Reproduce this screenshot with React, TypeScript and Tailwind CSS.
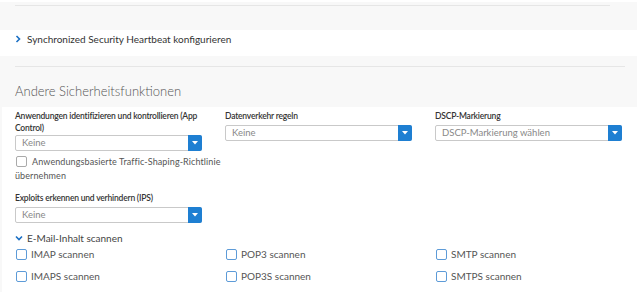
import { useState } from 'react'

const font = { fontFamily: 'Lato, "Open Sans", sans-serif' }

function Select({ value }: { value: string }) {
  return (
    <div className="flex h-[16px] w-[187px] rounded-[2px] border border-[#c9c9c9] bg-white">
      <div className="flex flex-1 items-center pl-[6px] text-[9.5px] text-[#888]">{value}</div>
      <div className="-my-px -mr-px flex w-[14px] items-center justify-center rounded-r-[2px] bg-[#1e7fd2]">
        <svg width="6" height="4" viewBox="0 0 6 4">
          <path d="M0 0h6L3 3.5z" fill="#fff" />
        </svg>
      </div>
    </div>
  )
}

function Check({ label }: { label: string }) {
  const [on, setOn] = useState(false)
  return (
    <label className="flex h-[14px] items-center gap-[4px] text-[10px] text-[#555]">
      <input type="checkbox" checked={on} onChange={() => setOn(!on)} className="hidden" />
      <span className="h-[11px] w-[11px] rounded-[2px] border border-[#5d9bd8] bg-white" />
      {label}
    </label>
  )
}

const labelCls = 'w-[187px] text-[8.5px] leading-[12px] font-semibold tracking-[-0.2px] text-[#333]'

export default function App() {
  return (
    <div className="h-[292px] w-[640px] overflow-hidden bg-white pt-[2px]" style={font}>
      <div className="mr-[3px] h-[28px] bg-[#f8f8f8] px-[15px] pt-[3px]">
        <div className="mr-[12px] border-t border-[#e6e6e6]" />
      </div>

      <div className="flex h-[26px] items-start gap-[6px] pt-[2px] pl-[15px] text-[10px] leading-[14px] text-[#333]">
        <svg width="6" height="14" viewBox="0 0 6 14">
          <path d="M1.5 4l3 3-3 3" stroke="#1a6fc4" strokeWidth="1.6" fill="none" />
        </svg>
        Synchronized Security Heartbeat konfigurieren
      </div>

      <div className="mr-[3px] bg-[#f8f8f8] pt-[10px]">
        <div className="mr-[12px] ml-[15px] border-t border-[#e6e6e6]" />
        <h2 className="h-[40px] px-[15px] pt-[16px] text-[13px] leading-[16px] font-light text-[#555]">
          Andere Sicherheitsfunktionen
        </h2>
        <div className="ml-[2px] bg-white px-[13px] pt-[3px] pb-[10px]">
          <div className="grid grid-cols-[210px_210px_210px]">
            <div className="flex flex-col">
              <div className={labelCls}>Anwendungen identifizieren und kontrollieren (App Control)</div>
              <div className="mt-[1px]">
                <Select value="Keine" />
              </div>
              <div className="mt-[4px] text-[9px] leading-[14px] tracking-[0.1px] text-[#555]">
                <span className="mr-[5px] ml-[1px] inline-block h-[11px] w-[11px] rounded-[2px] border border-[#aaa] align-[-2px]" />
                Anwendungsbasierte Traffic-Shaping-Richtlinie übernehmen
              </div>
              <div className={`mt-[9px] ${labelCls}`}>Exploits erkennen und verhindern (IPS)</div>
              <div className="mt-[3px]">
                <Select value="Keine" />
              </div>
            </div>
            <div className="flex flex-col">
              <div className={labelCls}>Datenverkehr regeln</div>
              <div className="mt-[3px]">
                <Select value="Keine" />
              </div>
            </div>
            <div className="flex flex-col">
              <div className={labelCls}>DSCP-Markierung</div>
              <div className="mt-[3px]">
                <Select value="DSCP-Markierung wählen" />
              </div>
            </div>
          </div>

          <div className="mt-[8px] flex h-[14px] items-center gap-[4px] text-[10px] text-[#444]">
            <svg width="8" height="6" viewBox="0 0 8 6">
              <path d="M1 1.5l3 3 3-3" stroke="#1a6fc4" strokeWidth="1.6" fill="none" />
            </svg>
            E-Mail-Inhalt scannen
          </div>
          <div className="mt-[2px] grid grid-cols-[210px_210px_210px] gap-y-[8px] pl-[1px]">
            <Check label="IMAP scannen" />
            <Check label="POP3 scannen" />
            <Check label="SMTP scannen" />
            <Check label="IMAPS scannen" />
            <Check label="POP3S scannen" />
            <Check label="SMTPS scannen" />
          </div>
        </div>
      </div>
    </div>
  )
}
